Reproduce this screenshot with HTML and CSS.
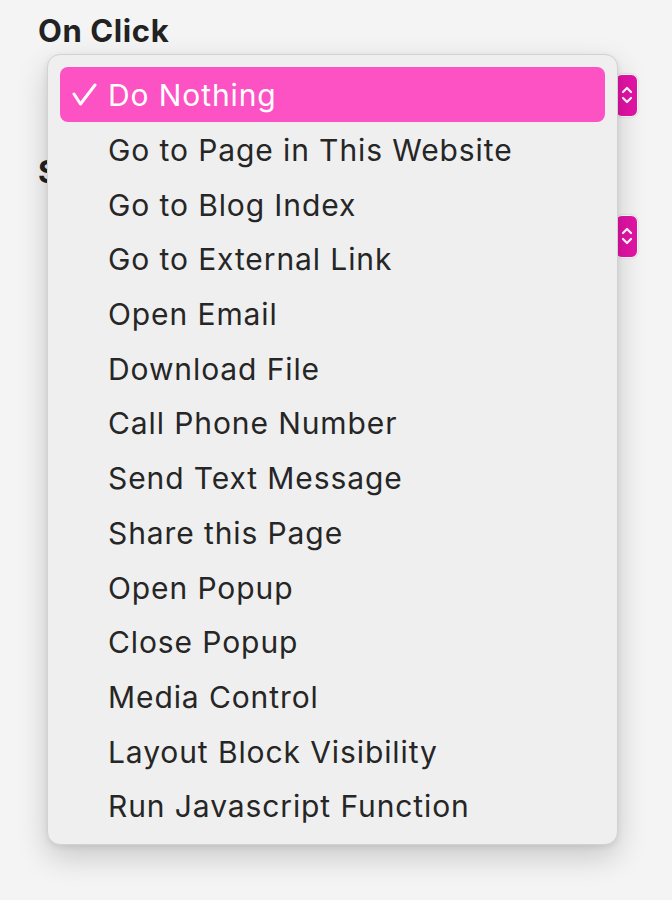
FILE: index.html
```html
<!DOCTYPE html>
<html lang="en">
    <head>
        <meta charset="utf-8"/>
        <title>On Click</title>
        <link rel="stylesheet" href="styles.css">
    </head>
    <body>
        <div class="panel">
            <h3 class="label">On Click</h3>
            <div class="field">
                <span class="stepper"><svg width="14" height="26" viewBox="0 0 14 26"><path d="M3 10 L7 6 L11 10 M3 16 L7 20 L11 16" fill="none" stroke="#fff" stroke-width="2.2" stroke-linecap="round" stroke-linejoin="round"/></svg></span>
            </div>
            <h3 class="label second">Style</h3>
            <div class="field">
                <span class="stepper"><svg width="14" height="26" viewBox="0 0 14 26"><path d="M3 10 L7 6 L11 10 M3 16 L7 20 L11 16" fill="none" stroke="#fff" stroke-width="2.2" stroke-linecap="round" stroke-linejoin="round"/></svg></span>
            </div>
        </div>

        <!-- popup menu of the On Click select -->
        <ul class="menu">
            <li class="item selected"><svg class="check" width="26" height="24" viewBox="0 0 26 24"><path d="M2 11 L8.5 21 L23 2" fill="none" stroke="#fff" stroke-width="3" stroke-linecap="round" stroke-linejoin="round"/></svg>Do Nothing</li>
            <li class="item">Go to Page in This Website</li>
            <li class="item">Go to Blog Index</li>
            <li class="item">Go to External Link</li>
            <li class="item">Open Email</li>
            <li class="item">Download File</li>
            <li class="item">Call Phone Number</li>
            <li class="item">Send Text Message</li>
            <li class="item">Share this Page</li>
            <li class="item">Open Popup</li>
            <li class="item">Close Popup</li>
            <li class="item">Media Control</li>
            <li class="item">Layout Block Visibility</li>
            <li class="item">Run Javascript Function</li>
        </ul>
    </body>
</html>
```

FILE: styles.css
```css
html, body {
    margin: 0;
    background-color: #f4f4f4;
}

body {
    font-family: Inter, "Liberation Sans", Arial, sans-serif;
    color: #262626;
    position: relative;
    min-height: 900px;
}

.panel {
    padding: 12px 34px 0 38px;
}

.label {
    margin: 0;
    font-size: 31px;
    font-weight: 700;
    letter-spacing: 0.6px;
    line-height: 38px;
    color: #222;
}

.label.second {
    margin-top: 36px;
}

.field {
    display: flex;
    justify-content: flex-end;
    align-items: center;
    height: 44px;
    margin-top: 23px;
}

.stepper {
    display: flex;
    align-items: center;
    justify-content: center;
    width: 21px;
    height: 41px;
    border-radius: 7px;
    border: 1px solid #fff;
    background-color: #e313a6;
    box-shadow: 0 0 2px rgba(0, 0, 0, 0.2);
}

.menu {
    position: absolute;
    left: 47px;
    top: 54px;
    width: 545px;
    margin: 0;
    padding: 12px 12px 11px 12px;
    list-style: none;
    background-color: #efefef;
    border: 1px solid #d2d2d2;
    border-radius: 13px;
    box-shadow: 0 12px 30px rgba(0, 0, 0, 0.18), 0 2px 6px rgba(0, 0, 0, 0.08);
}

.item {
    display: flex;
    align-items: center;
    height: 54.7px;
    padding-left: 48px;
    padding-top: 2px;
    box-sizing: border-box;
    font-size: 30px;
    letter-spacing: 0.9px;
    color: #262626;
    border-radius: 8px;
    position: relative;
}

.item.selected {
    background-color: #fd52c4;
    color: #fff;
}

.check {
    position: absolute;
    left: 12px;
    top: 16px;
}
```
